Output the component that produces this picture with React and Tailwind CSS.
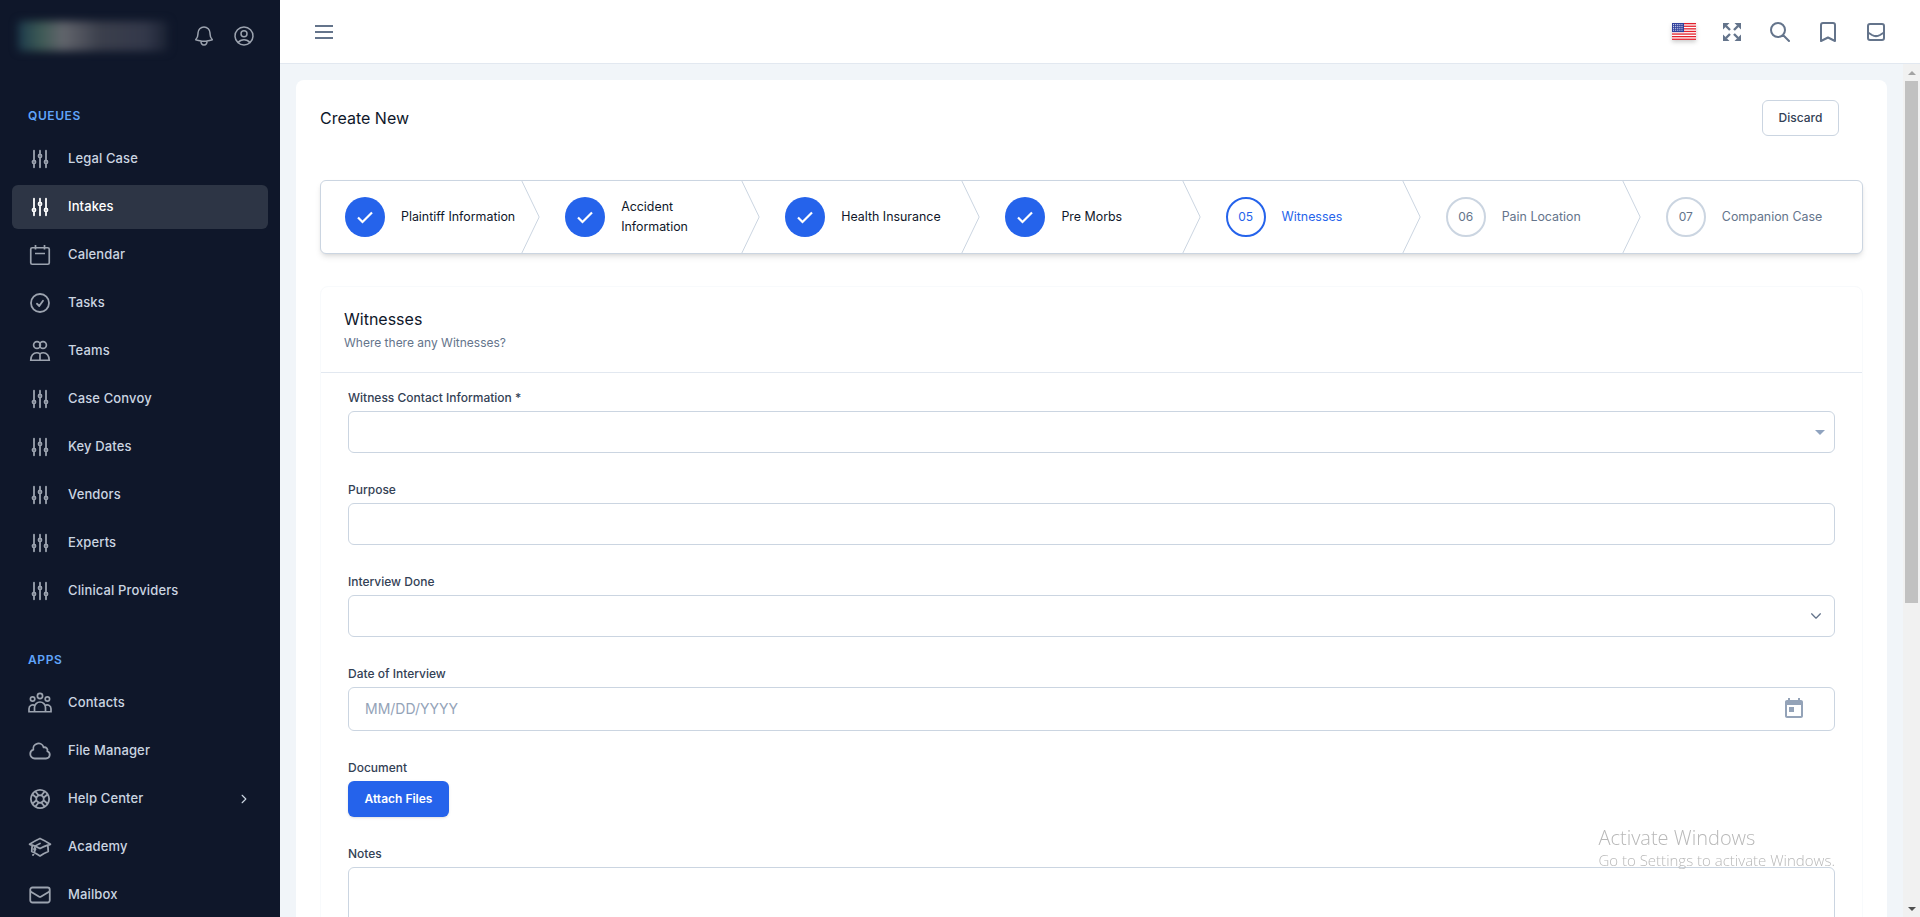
import {
    HiOutlineAcademicCap,
    HiOutlineAdjustmentsVertical,
    HiOutlineBell,
    HiOutlineCheckCircle,
    HiOutlineChevronDown,
    HiOutlineChevronRight,
    HiOutlineCloud,
    HiOutlineEnvelope,
    HiOutlineLifebuoy,
    HiOutlineUserCircle,
} from "react-icons/hi2";

const CalendarIcon = ({ className }) => (
    <svg viewBox="0 0 24 24" fill="none" stroke="currentColor" strokeWidth="1.7" className={className}>
        <rect x="2.75" y="4.75" width="18.5" height="16.5" rx="1.5" />
        <path d="M7.5 2v4.5M16.5 2v4.5M7 10.5h10" />
    </svg>
);

const TeamsIcon = ({ className }) => (
    <svg viewBox="0 0 24 24" fill="none" stroke="currentColor" strokeWidth="1.7" className={className}>
        <circle cx="9" cy="6" r="3.4" />
        <circle cx="15" cy="6" r="3.4" />
        <path d="M2.75 21.25h18.5c0-4.5-2.6-7.5-6-7.5-1.3 0-2.4.4-3.25 1.1-.85-.7-1.95-1.1-3.25-1.1-3.4 0-6 3-6 7.5zM12 14.85v6.4" />
    </svg>
);

const ContactsIcon = ({ className }) => (
    <svg viewBox="0 0 24 24" fill="none" stroke="currentColor" strokeWidth="1.7" className={className}>
        <circle cx="12" cy="5" r="2.6" />
        <circle cx="4.6" cy="8" r="2.2" />
        <circle cx="19.4" cy="8" r="2.2" />
        <path d="M6.5 20.75V16.5a5.5 5.5 0 0 1 11 0v4.25zM6.5 20.75H1v-3a3.7 3.7 0 0 1 6.2-2.8M17.5 20.75H23v-3a3.7 3.7 0 0 0-6.2-2.8" />
    </svg>
);

const MenuIcon = ({ className }) => (
    <svg viewBox="0 0 24 24" fill="none" stroke="currentColor" strokeWidth="2" className={className}>
        <path d="M3 6h18M3 12h18M3 18h18" />
    </svg>
);

const ExpandIcon = ({ className }) => (
    <svg viewBox="0 0 24 24" fill="currentColor" stroke="none" className={className}>
        <path d="M3 3h6.5L3 9.5zM21 3h-6.5L21 9.5zM3 21h6.5L3 14.5zM21 21h-6.5L21 14.5z" />
        <path d="M6 6l4 4M18 6l-4 4M6 18l4-4M18 18l-4-4" stroke="currentColor" strokeWidth="2.4" fill="none" />
    </svg>
);

const SearchIcon = ({ className }) => (
    <svg viewBox="0 0 24 24" fill="none" stroke="currentColor" strokeWidth="2" strokeLinecap="round" className={className}>
        <path d="M21 21l-6-6m2-5a7 7 0 1 1-14 0 7 7 0 0 1 14 0z" />
    </svg>
);

const BookmarkIcon = ({ className }) => (
    <svg viewBox="0 0 24 24" fill="none" stroke="currentColor" strokeWidth="2" strokeLinejoin="round" className={className}>
        <path d="M5 5a2 2 0 0 1 2-2h10a2 2 0 0 1 2 2v16l-7-3.5L5 21V5z" />
    </svg>
);

const InboxIcon = ({ className }) => (
    <svg viewBox="0 0 24 24" fill="none" stroke="currentColor" strokeWidth="2" className={className}>
        <rect x="4" y="4" width="16" height="16" rx="2" />
        <path d="M4 12.5l4 2.5c2.5 1.4 5.5 1.4 8 0l4-2.5" />
    </svg>
);

const CheckIcon = ({ className }) => (
    <svg viewBox="0 0 24 24" fill="none" stroke="currentColor" strokeWidth="2.2" className={className}>
        <path d="M5 12.5l4.5 4.5L19 7.5" />
    </svg>
);

const TodayIcon = ({ className }) => (
    <svg viewBox="0 0 24 24" fill="currentColor" className={className}>
        <path d="M19 3h-1V1h-2v2H8V1H6v2H5c-1.11 0-1.99.9-1.99 2L3 19c0 1.1.89 2 2 2h14c1.1 0 2-.9 2-2V5c0-1.1-.9-2-2-2zm0 16H5V8h14v11zM7 10h5v5H7z" />
    </svg>
);

const queues = [
    { label: "Legal Case", icon: HiOutlineAdjustmentsVertical },
    { label: "Intakes", icon: HiOutlineAdjustmentsVertical, active: true },
    { label: "Calendar", icon: CalendarIcon },
    { label: "Tasks", icon: HiOutlineCheckCircle },
    { label: "Teams", icon: TeamsIcon },
    { label: "Case Convoy", icon: HiOutlineAdjustmentsVertical },
    { label: "Key Dates", icon: HiOutlineAdjustmentsVertical },
    { label: "Vendors", icon: HiOutlineAdjustmentsVertical },
    { label: "Experts", icon: HiOutlineAdjustmentsVertical },
    { label: "Clinical Providers", icon: HiOutlineAdjustmentsVertical },
];

const apps = [
    { label: "Contacts", icon: ContactsIcon },
    { label: "File Manager", icon: HiOutlineCloud },
    { label: "Help Center", icon: HiOutlineLifebuoy, arrow: true },
    { label: "Academy", icon: HiOutlineAcademicCap },
    { label: "Mailbox", icon: HiOutlineEnvelope },
];

const steps = [
    { label: "Plaintiff Information", done: true },
    { label: "Accident Information", done: true },
    { label: "Health Insurance", done: true },
    { label: "Pre Morbs", done: true },
    { label: "Witnesses", num: "05", current: true },
    { label: "Pain Location", num: "06" },
    { label: "Companion Case", num: "07" },
];

const NavItem = ({ item }) => {
    const Icon = item.icon;
    return (
        <div className={`mx-3 mb-1 flex h-11 shrink-0 items-center rounded-md px-4 ${item.active ? "bg-[#2d3545] text-white" : "text-[#cbd5e1]"}`}>
            <Icon strokeWidth={1.8} className={`mr-4 size-6 shrink-0 ${item.active ? "text-white" : "text-[#9ca3af]"}`} />
            <span className="flex-1 text-[13px] font-medium tracking-[0.01em]">{item.label}</span>
            {item.arrow && <HiOutlineChevronRight strokeWidth={2.2} className="mr-[2px] size-3 text-[#cbd5e1]" />}
        </div>
    );
};

const Sidebar = () => (
    <aside className="flex h-full w-[280px] shrink-0 flex-col overflow-hidden bg-[#0f172a]">
        <div className="flex h-[72px] shrink-0 items-center pl-[18px] pr-6">
            <div className="h-[30px] w-[150px] rounded-sm bg-[linear-gradient(90deg,#1c3a4c_0%,#3d5a55_15%,#62656c_30%,#3b3f4c_55%,#33384a_85%,#1a2233_100%)] blur-[4px]"></div>
            <div className="ml-auto flex items-center gap-4">
                <HiOutlineBell className="size-6 text-[#9ca3af]" />
                <HiOutlineUserCircle className="size-6 text-[#9ca3af]" />
            </div>
        </div>
        <div className="mt-6 shrink-0 px-7 pb-[11px] pt-[10px] text-xs font-semibold leading-5 tracking-[0.05em] text-[#60a5fa]">QUEUES</div>
        {queues.map((item) => (
            <NavItem key={item.label} item={item} />
        ))}
        <div className="mt-[29px] shrink-0 px-7 pb-[11px] pt-[4px] text-xs font-semibold leading-5 tracking-[0.05em] text-[#60a5fa]">APPS</div>
        {apps.map((item) => (
            <NavItem key={item.label} item={item} />
        ))}
    </aside>
);

const stripes = [0, 1, 2, 3, 4, 5, 6];
const starRows = [0, 1, 2, 3];
const starCols = [0, 1, 2, 3, 4];

const FlagUS = () => (
    <div className="flex size-6 items-center justify-center">
        <svg width="24" height="17" viewBox="0 0 24 17" className="drop-shadow-[0_2px_2px_rgba(0,0,0,0.2)]">
            <rect width="24" height="17" fill="#fff" />
            {stripes.map((s) => (
                <rect key={s} y={s * 2.6} width="24" height="1.3" fill="#e3202c" />
            ))}
            <rect width="12" height="9.1" fill="#30409c" />
            {starRows.map((r) =>
                starCols.map((c) => <rect key={`${r}-${c}`} x={1 + c * 2.1} y={1 + r * 1.9} width="1.1" height="1.1" fill="#c9cfe8" />)
            )}
        </svg>
    </div>
);

const Topbar = () => (
    <header className="flex h-16 shrink-0 items-center border-b border-[#e2e8f0] bg-white pl-8 pr-8">
        <MenuIcon className="size-6 text-[#64748b]" />
        <div className="ml-auto flex items-center gap-6">
            <FlagUS />
            <ExpandIcon className="size-6 text-[#64748b]" />
            <SearchIcon className="size-6 text-[#64748b]" />
            <BookmarkIcon className="size-6 text-[#64748b]" />
            <InboxIcon className="size-6 text-[#64748b]" />
        </div>
    </header>
);

const Step = ({ step, last }) => (
    <div className="relative flex h-full items-center pl-6 pr-6">
        {step.done ? (
            <div className="flex size-10 shrink-0 items-center justify-center rounded-full bg-[#2563eb]">
                <CheckIcon className="size-6 text-white" />
            </div>
        ) : (
            <div className={`flex size-10 shrink-0 items-center justify-center rounded-full border-2 text-xs ${step.current ? "border-[#2563eb] text-[#2563eb]" : "border-[#cbd5e1] text-[#64748b]"}`}>
                {step.num}
            </div>
        )}
        <span className={`ml-4 text-[12.4px] font-normal leading-5 ${step.current ? "text-[#2563eb]" : step.done ? "text-[#0f172a]" : "text-[#64748b]"}`}>{step.label}</span>
        {!last && (
            <svg viewBox="0 0 22 80" fill="none" preserveAspectRatio="none" className="absolute right-0 top-0 h-full w-5 text-[#cbd5e1]">
                <path d="M0 -2L20 40L0 82" stroke="currentColor" vectorEffect="non-scaling-stroke" />
            </svg>
        )}
    </div>
);

const Field = ({ label, children }) => (
    <div>
        <div className="mb-[3px] text-xs font-medium leading-5 text-[#334155]">{label}</div>
        {children}
    </div>
);

const boxClass = "flex w-full items-center rounded-md border border-[#cbd5e1] bg-white px-4";

const App = () => (
    <div className="flex h-[917px] w-[1920px] overflow-hidden font-['Inter',sans-serif]">
        <Sidebar />
        <div className="flex min-w-0 flex-1 flex-col">
            <Topbar />
            <div className="flex min-h-0 flex-1">
                <main className="min-w-0 flex-1 overflow-hidden bg-[#f1f5f9] p-4">
                    <div className="rounded-lg bg-white px-6 pb-10 pt-5">
                        <div className="flex h-[36px] items-center pr-[24px]">
                            <h1 className="text-base font-normal text-[#0f172a]">Create New</h1>
                            <button className="ml-auto h-9 w-[77px] rounded-md border border-[#cbd5e1] bg-white text-xs font-medium text-[#334155]">Discard</button>
                        </div>
                        <div className="mt-11 grid h-[74px] grid-cols-7 overflow-hidden rounded-md border border-[#cbd5e1] bg-white shadow-md">
                            {steps.map((step, i) => (
                                <Step key={step.label} step={step} last={i === steps.length - 1} />
                            ))}
                        </div>
                        <div className="mt-8 rounded-lg border border-[#f8fafc] bg-white">
                            <div className="border-b border-[#e2e8f0] px-[23px] pb-[19px] pt-5">
                                <h2 className="text-base font-normal leading-6 text-[#0f172a]">Witnesses</h2>
                                <p className="mt-[2px] text-xs leading-5 text-[#64748b]">Where there any Witnesses?</p>
                            </div>
                            <div className="flex flex-col gap-[27px] px-[27px] pt-[15px]">
                                <Field label="Witness Contact Information *">
                                    <div className={`${boxClass} h-[42px] justify-end pr-[9px]`}>
                                        <span className="border-x-[5px] border-t-[5px] border-x-transparent border-t-[#8fa3bf]"></span>
                                    </div>
                                </Field>
                                <Field label="Purpose">
                                    <div className={`${boxClass} h-[42px]`}></div>
                                </Field>
                                <Field label="Interview Done">
                                    <div className={`${boxClass} h-[42px] justify-end pr-[11px]`}>
                                        <HiOutlineChevronDown strokeWidth={2.2} className="size-[14px] text-[#64748b]" />
                                    </div>
                                </Field>
                                <Field label="Date of Interview">
                                    <div className={`${boxClass} h-11 justify-between pr-7`}>
                                        <span className="text-sm text-[#94a3b8]">MM/DD/YYYY</span>
                                        <TodayIcon className="size-6 text-[#94a3b8]" />
                                    </div>
                                </Field>
                                <div>
                                    <div className="mb-[3px] text-xs font-medium leading-5 text-[#334155]">Document</div>
                                    <button className="h-9 w-[101px] rounded-md bg-[#2563eb] text-xs font-semibold text-white shadow-sm">Attach Files</button>
                                </div>
                                <Field label="Notes">
                                    <div className={`${boxClass} h-[120px]`}></div>
                                </Field>
                            </div>
                        </div>
                    </div>
                </main>
                <div className="flex w-[17px] shrink-0 flex-col bg-[#f1f1f1]">
                    <div className="flex h-[17px] items-center justify-center">
                        <span className="border-x-4 border-b-4 border-x-transparent border-b-[#a3a3a3]"></span>
                    </div>
                    <div className="mx-auto h-[522px] w-[13px] bg-[#c1c1c1]"></div>
                    <div className="mt-auto flex h-[17px] items-center justify-center">
                        <span className="border-x-4 border-t-4 border-x-transparent border-t-[#505050]"></span>
                    </div>
                </div>
            </div>
        </div>
        <div className="pointer-events-none fixed bottom-[47px] right-[85px] font-['Open_Sans',sans-serif] font-light text-[#b8b8b8]">
            <div className="text-[20px] leading-6">Activate Windows</div>
            <div className="text-[15px] leading-5">Go to Settings to activate Windows.</div>
        </div>
    </div>
);

export default App;
